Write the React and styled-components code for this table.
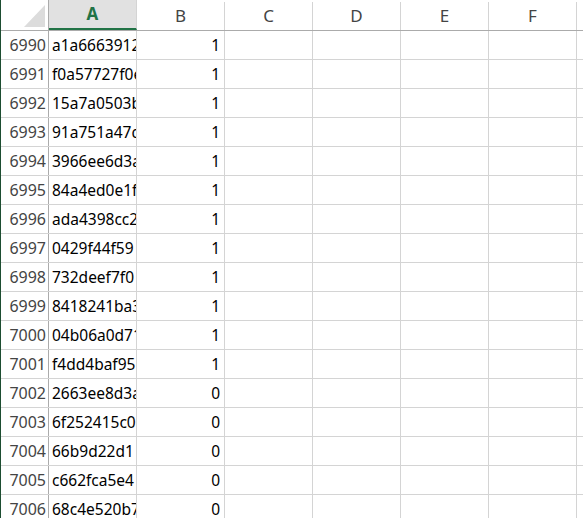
import React from "react";
import styled, { createGlobalStyle } from "styled-components";

const GlobalStyle = createGlobalStyle`
  html, body {
    margin: 0;
    padding: 0;
    background: #fff;
    overflow: hidden;
  }
  body {
    font-family: "Noto Sans", "Open Sans", sans-serif;
  }
`;

const Sheet = styled.div`
  width: 583px;
  height: 518px;
  overflow: hidden;
  border-left: 1px solid #1d4d31;
  box-sizing: border-box;
  background: #fff;
`;

const HeaderRow = styled.div`
  display: grid;
  grid-template-columns: 48px repeat(6, 88px) 1fr;
  height: 31px;
  box-sizing: border-box;
  border-bottom: 1px solid #ababab;
`;

const Corner = styled.div`
  position: relative;
  border-right: 1px solid #ababab;
  background: #fff;
`;

const CornerTriangle = styled.div`
  position: absolute;
  right: 3px;
  bottom: 3px;
  width: 21px;
  height: 22px;
  background: #dcdcdc;
  clip-path: polygon(100% 0, 100% 100%, 0 100%);
`;

const ColHead = styled.div`
  display: flex;
  align-items: center;
  justify-content: center;
  box-sizing: border-box;
  padding-bottom: 1px;
  font-size: 17px;
  color: ${(p) => (p.$active ? "#217346" : "#444")};
  font-weight: ${(p) => (p.$active ? 700 : 400)};
  background: ${(p) => (p.$active ? "#e1e1e1" : "#fff")};
  border-right: ${(p) => (p.$last ? "none" : "1px solid #d4d4d4")};
  border-bottom: ${(p) => (p.$active ? "2px solid #217346" : "none")};
  margin-top: ${(p) => (p.$active ? "0" : "2px")};
`;

const Row = styled.div`
  display: grid;
  grid-template-columns: 48px repeat(6, 88px) 1fr;
  height: 29px;
  box-sizing: border-box;
  border-bottom: 1px solid #d4d4d4;
`;

const RowHead = styled.div`
  display: flex;
  align-items: center;
  justify-content: flex-end;
  padding-right: 2px;
  font-size: 16px;
  color: #444;
  border-right: 1px solid #ababab;
`;

const Cell = styled.div`
  display: flex;
  align-items: center;
  justify-content: ${(p) => (p.$num ? "flex-end" : "flex-start")};
  padding: ${(p) => (p.$num ? "0 4px 0 0" : "0 0 0 3px")};
  overflow: hidden;
  white-space: nowrap;
  font-size: 15.5px;
  color: #000;
  border-right: ${(p) => (p.$last ? "none" : "1px solid #d4d4d4")};
`;

const rows = [
  [6990, "a1a6663912c", 1],
  [6991, "f0a57727f0e", 1],
  [6992, "15a7a0503b", 1],
  [6993, "91a751a47d", 1],
  [6994, "3966ee6d3a", 1],
  [6995, "84a4ed0e1f", 1],
  [6996, "ada4398cc2", 1],
  [6997, "0429f44f59", 1],
  [6998, "732deef7f0", 1],
  [6999, "8418241ba3", 1],
  [7000, "04b06a0d71", 1],
  [7001, "f4dd4baf95", 1],
  [7002, "2663ee8d3a", 0],
  [7003, "6f252415c0", 0],
  [7004, "66b9d22d1", 0],
  [7005, "c662fca5e4", 0],
  [7006, "68c4e520b7", 0],
];

const cols = ["A", "B", "C", "D", "E", "F"];

export default function App() {
  return (
    <Sheet>
      <GlobalStyle />
      <HeaderRow>
        <Corner>
          <CornerTriangle />
        </Corner>
        {cols.map((c) => (
          <ColHead key={c} $active={c === "A"}>
            {c}
          </ColHead>
        ))}
        <ColHead $last />
      </HeaderRow>
      {rows.map(([n, id, v]) => (
        <Row key={n}>
          <RowHead>{n}</RowHead>
          <Cell>{id}</Cell>
          <Cell $num>{v}</Cell>
          <Cell />
          <Cell />
          <Cell />
          <Cell />
          <Cell $last />
        </Row>
      ))}
    </Sheet>
  );
}
